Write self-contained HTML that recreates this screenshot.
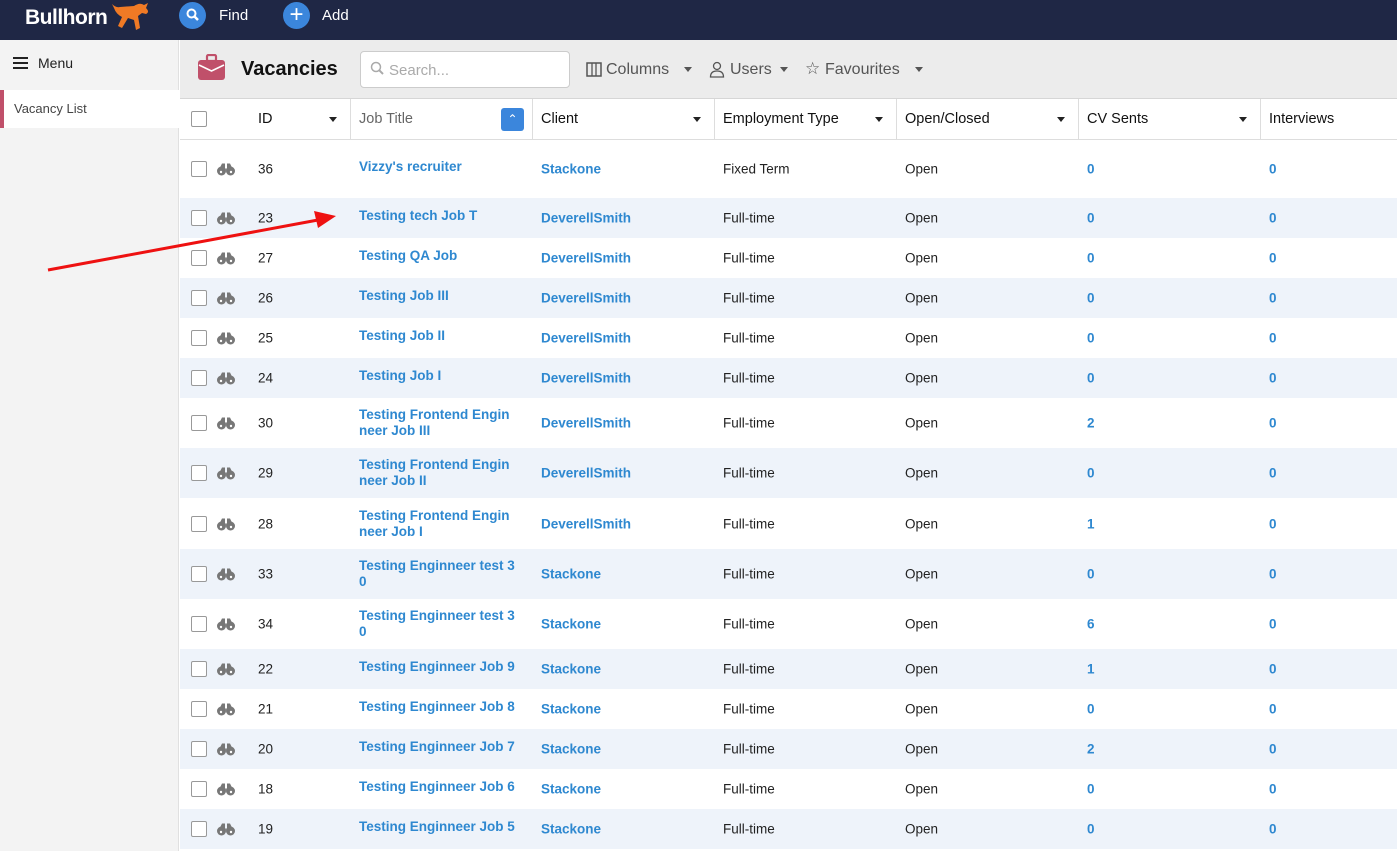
<!DOCTYPE html>
<html><head><meta charset="utf-8"><style>
*{margin:0;padding:0;box-sizing:border-box}
body{width:1397px;height:851px;overflow:hidden;font-family:"Liberation Sans",sans-serif;background:#fff;position:relative;color:#222}
.top{position:absolute;left:0;top:0;width:1397px;height:40px;background:#1f2745}
.side{position:absolute;left:0;top:40px;width:179px;height:811px;background:#f3f3f3;border-right:1px solid #e0e0e0}
.tool{position:absolute;left:180px;top:40px;width:1217px;height:59px;background:#ececec;border-bottom:1px solid #d6d6d6}
.hdr{position:absolute;left:180px;top:99px;width:1217px;height:41px;background:#fff;border-bottom:1px solid #ddd;font-size:14.5px;color:#111}
.hdr div{position:absolute;top:0;height:41px;line-height:40px}
.hdr .vl{width:1px;background:#ddd}
.caret{position:absolute;width:0;height:0;border-left:4px solid transparent;border-right:4px solid transparent;border-top:5px solid #222}
.hdr .caret{top:18px;height:0;line-height:0}
.row{position:absolute;left:180px;width:1217px;font-size:13.5px}
.row.s{background:#eef3fa}
.row>*{position:absolute;top:50%;transform:translateY(-50%)}
.cb{left:11px;width:16px;height:16px;border:1px solid #999;border-radius:2px;background:#fff}
.bi{left:37px}
.id{left:78px}
.t{left:179px;color:#2e88d0;font-weight:bold;line-height:16px;width:170px}
.c{left:361px;color:#2e88d0;font-weight:bold}
.e{left:543px}
.o{left:725px}
.cv{left:907px;color:#2e88d0;font-weight:bold}
.iv{left:1089px;color:#2e88d0;font-weight:bold}
.tl{position:absolute;top:21px;font-size:16px;color:#555}
</style></head><body>
<div class="top">
<div style="position:absolute;left:25px;top:6px;color:#fff;font-weight:bold;font-size:21px;letter-spacing:-0.5px">Bullhorn</div>
<svg style="position:absolute;left:108px;top:0" width="44" height="32" viewBox="0 0 44 32"><path d="M4 4 Q8 8 12 7 L26 6 Q32 2 36 5 L40 3 L38 8 Q42 12 38 14 L34 13 L30 16 L32 28 L28 30 L26 20 L20 18 L14 28 L10 26 L14 17 Q8 14 6 8 Z" fill="#f07a25"/></svg>
<div style="position:absolute;left:179px;top:2px;width:27px;height:27px;border-radius:50%;background:#3b86dc"></div>
<svg style="position:absolute;left:185px;top:7px" width="16" height="16"><circle cx="6.5" cy="6.5" r="4" stroke="#fff" stroke-width="2" fill="none"/><path d="M9.5 9.5 L13 13" stroke="#fff" stroke-width="2.5"/></svg>
<div style="position:absolute;left:219px;top:7px;color:#fff;font-size:15px">Find</div>
<div style="position:absolute;left:283px;top:2px;width:27px;height:27px;border-radius:50%;background:#3b86dc;color:#fff;font-size:24px;line-height:26px;text-align:center">+</div>
<div style="position:absolute;left:322px;top:7px;color:#fff;font-size:15px">Add</div>
</div>
<div class="side">
<div style="position:absolute;left:13px;top:17px;width:15px;height:2px;background:#222;box-shadow:0 5px 0 #222,0 10px 0 #222"></div>
<div style="position:absolute;left:38px;top:15px;font-size:14px">Menu</div>
<div style="position:absolute;left:0;top:50px;width:179px;height:38px;background:#fff;border-left:4px solid #c0506a"><span style="position:absolute;left:10px;top:11px;font-size:13px;color:#444">Vacancy List</span></div>
</div>
<div class="tool">
<svg style="position:absolute;left:18px;top:14px" width="27" height="26" viewBox="0 0 27 26"><rect x="9" y="1" width="9" height="6" rx="1.5" fill="none" stroke="#c0506a" stroke-width="2.2"/><rect x="0" y="6" width="27" height="20" rx="3" fill="#c0506a"/><path d="M1 11 L13.5 17 L26 11" stroke="#fff" stroke-width="1.6" fill="none"/></svg>
<div style="position:absolute;left:61px;top:18px;font-size:20px;font-weight:bold;color:#111">Vacancies</div>
<div style="position:absolute;left:180px;top:11px;width:210px;height:37px;background:#fff;border:1px solid #ccc;border-radius:4px"><span style="position:absolute;left:28px;top:10px;font-size:15px;color:#aaa">Search...</span>
<svg style="position:absolute;left:9px;top:9px" width="15" height="15"><circle cx="6" cy="6" r="4.5" stroke="#aaa" stroke-width="1.5" fill="none"/><path d="M9.5 9.5 L13 13" stroke="#aaa" stroke-width="2"/></svg></div>
<svg style="position:absolute;left:406px;top:22px" width="16" height="15"><rect x="1" y="1" width="14" height="13" fill="none" stroke="#555" stroke-width="1.5"/><path d="M6 1V14M10 1V14" stroke="#555" stroke-width="1.3"/></svg>
<div class="tl" style="left:426px">Columns</div><div class="caret" style="left:504px;top:27px;border-top-color:#555"></div>
<svg style="position:absolute;left:529px;top:21px" width="16" height="17"><circle cx="8" cy="5" r="3.5" stroke="#555" stroke-width="1.3" fill="none"/><path d="M1.5 16 Q1.5 10 8 10 Q14.5 10 14.5 16 Z" stroke="#555" stroke-width="1.3" fill="none"/></svg>
<div class="tl" style="left:550px">Users</div><div class="caret" style="left:600px;top:27px;border-top-color:#555"></div>
<div class="tl" style="left:625px;top:19px;font-size:17px">☆</div>
<div class="tl" style="left:645px">Favourites</div><div class="caret" style="left:735px;top:27px;border-top-color:#555"></div>
</div>
<div class="hdr">
<div style="left:11px;top:12px;width:16px;height:16px;border:1px solid #999;border-radius:2px"></div>
<div style="left:78px">ID</div><div class="caret" style="left:149px"></div>
<div class="vl" style="left:170px"></div>
<div style="left:179px;color:#666">Job Title</div>
<div style="left:321px;top:9px;width:23px;height:23px;background:#3b86dc;border-radius:3px;line-height:22px;text-align:center;color:#fff;font-size:12px">&#8963;</div>
<div class="vl" style="left:352px"></div>
<div style="left:361px">Client</div><div class="caret" style="left:513px"></div>
<div class="vl" style="left:534px"></div>
<div style="left:543px">Employment Type</div><div class="caret" style="left:695px"></div>
<div class="vl" style="left:716px"></div>
<div style="left:725px">Open/Closed</div><div class="caret" style="left:877px"></div>
<div class="vl" style="left:898px"></div>
<div style="left:907px">CV Sents</div><div class="caret" style="left:1059px"></div>
<div class="vl" style="left:1080px"></div>
<div style="left:1089px">Interviews</div>
</div>
<svg width="0" height="0" style="position:absolute"><defs><g id="b"><circle cx="4.5" cy="8.5" r="4.5" fill="#777"/><circle cx="13.5" cy="8.5" r="4.5" fill="#777"/><path d="M2 7 L5 1 L8 1 L8 6 L10 6 L10 1 L13 1 L16 7 Z" fill="#777"/><circle cx="4" cy="9.5" r="1.2" fill="#fff"/><circle cx="14" cy="9.5" r="1.2" fill="#fff"/></g></defs></svg>
<div class="row" style="top:140px;height:58px"><div class="cb"></div><svg class="bi" width="18" height="13"><use href="#b"/></svg><span class="id">36</span><span class="t" style="margin-top:-2px">Vizzy's recruiter</span><span class="c">Stackone</span><span class="e">Fixed Term</span><span class="o">Open</span><span class="cv">0</span><span class="iv">0</span></div>
<div class="row s" style="top:198px;height:40px"><div class="cb"></div><svg class="bi" width="18" height="13"><use href="#b"/></svg><span class="id">23</span><span class="t" style="margin-top:-2px">Testing tech Job T</span><span class="c">DeverellSmith</span><span class="e">Full-time</span><span class="o">Open</span><span class="cv">0</span><span class="iv">0</span></div>
<div class="row" style="top:238px;height:40px"><div class="cb"></div><svg class="bi" width="18" height="13"><use href="#b"/></svg><span class="id">27</span><span class="t" style="margin-top:-2px">Testing QA Job</span><span class="c">DeverellSmith</span><span class="e">Full-time</span><span class="o">Open</span><span class="cv">0</span><span class="iv">0</span></div>
<div class="row s" style="top:278px;height:40px"><div class="cb"></div><svg class="bi" width="18" height="13"><use href="#b"/></svg><span class="id">26</span><span class="t" style="margin-top:-2px">Testing Job III</span><span class="c">DeverellSmith</span><span class="e">Full-time</span><span class="o">Open</span><span class="cv">0</span><span class="iv">0</span></div>
<div class="row" style="top:318px;height:40px"><div class="cb"></div><svg class="bi" width="18" height="13"><use href="#b"/></svg><span class="id">25</span><span class="t" style="margin-top:-2px">Testing Job II</span><span class="c">DeverellSmith</span><span class="e">Full-time</span><span class="o">Open</span><span class="cv">0</span><span class="iv">0</span></div>
<div class="row s" style="top:358px;height:40px"><div class="cb"></div><svg class="bi" width="18" height="13"><use href="#b"/></svg><span class="id">24</span><span class="t" style="margin-top:-2px">Testing Job I</span><span class="c">DeverellSmith</span><span class="e">Full-time</span><span class="o">Open</span><span class="cv">0</span><span class="iv">0</span></div>
<div class="row" style="top:398px;height:50px"><div class="cb"></div><svg class="bi" width="18" height="13"><use href="#b"/></svg><span class="id">30</span><span class="t">Testing Frontend Engin<br>neer Job III</span><span class="c">DeverellSmith</span><span class="e">Full-time</span><span class="o">Open</span><span class="cv">2</span><span class="iv">0</span></div>
<div class="row s" style="top:448px;height:50px"><div class="cb"></div><svg class="bi" width="18" height="13"><use href="#b"/></svg><span class="id">29</span><span class="t">Testing Frontend Engin<br>neer Job II</span><span class="c">DeverellSmith</span><span class="e">Full-time</span><span class="o">Open</span><span class="cv">0</span><span class="iv">0</span></div>
<div class="row" style="top:498px;height:51px"><div class="cb"></div><svg class="bi" width="18" height="13"><use href="#b"/></svg><span class="id">28</span><span class="t">Testing Frontend Engin<br>neer Job I</span><span class="c">DeverellSmith</span><span class="e">Full-time</span><span class="o">Open</span><span class="cv">1</span><span class="iv">0</span></div>
<div class="row s" style="top:549px;height:50px"><div class="cb"></div><svg class="bi" width="18" height="13"><use href="#b"/></svg><span class="id">33</span><span class="t">Testing Enginneer test 3<br>0</span><span class="c">Stackone</span><span class="e">Full-time</span><span class="o">Open</span><span class="cv">0</span><span class="iv">0</span></div>
<div class="row" style="top:599px;height:50px"><div class="cb"></div><svg class="bi" width="18" height="13"><use href="#b"/></svg><span class="id">34</span><span class="t">Testing Enginneer test 3<br>0</span><span class="c">Stackone</span><span class="e">Full-time</span><span class="o">Open</span><span class="cv">6</span><span class="iv">0</span></div>
<div class="row s" style="top:649px;height:40px"><div class="cb"></div><svg class="bi" width="18" height="13"><use href="#b"/></svg><span class="id">22</span><span class="t" style="margin-top:-2px">Testing Enginneer Job 9</span><span class="c">Stackone</span><span class="e">Full-time</span><span class="o">Open</span><span class="cv">1</span><span class="iv">0</span></div>
<div class="row" style="top:689px;height:40px"><div class="cb"></div><svg class="bi" width="18" height="13"><use href="#b"/></svg><span class="id">21</span><span class="t" style="margin-top:-2px">Testing Enginneer Job 8</span><span class="c">Stackone</span><span class="e">Full-time</span><span class="o">Open</span><span class="cv">0</span><span class="iv">0</span></div>
<div class="row s" style="top:729px;height:40px"><div class="cb"></div><svg class="bi" width="18" height="13"><use href="#b"/></svg><span class="id">20</span><span class="t" style="margin-top:-2px">Testing Enginneer Job 7</span><span class="c">Stackone</span><span class="e">Full-time</span><span class="o">Open</span><span class="cv">2</span><span class="iv">0</span></div>
<div class="row" style="top:769px;height:40px"><div class="cb"></div><svg class="bi" width="18" height="13"><use href="#b"/></svg><span class="id">18</span><span class="t" style="margin-top:-2px">Testing Enginneer Job 6</span><span class="c">Stackone</span><span class="e">Full-time</span><span class="o">Open</span><span class="cv">0</span><span class="iv">0</span></div>
<div class="row s" style="top:809px;height:40px"><div class="cb"></div><svg class="bi" width="18" height="13"><use href="#b"/></svg><span class="id">19</span><span class="t" style="margin-top:-2px">Testing Enginneer Job 5</span><span class="c">Stackone</span><span class="e">Full-time</span><span class="o">Open</span><span class="cv">0</span><span class="iv">0</span></div>
<svg style="position:absolute;left:0;top:0" width="1397" height="851"><line x1="48" y1="270" x2="318" y2="220" stroke="#ee1111" stroke-width="3"/><path d="M336 216 L314 211 L318 228 Z" fill="#ee1111"/></svg>
</body></html>
